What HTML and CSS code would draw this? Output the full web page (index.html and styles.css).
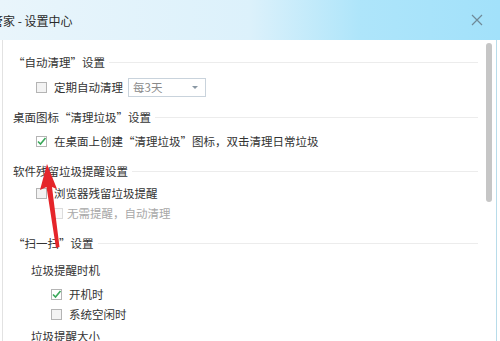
FILE: index.html
```html
<!DOCTYPE html>
<html lang="zh-CN">
<head>
    <meta charset="UTF-8">
    <title>设置中心</title>
    <link rel="stylesheet" href="styles.css">
</head>
<body>
    <div class="window">
        <div class="titlebar">
            <span class="title">管家 - 设置中心</span>
            <svg class="close" width="12" height="12" viewBox="0 0 12 12">
                <path d="M1 1 L11 11 M11 1 L1 11" stroke="#6f8a98" stroke-width="1.2" fill="none"/>
            </svg>
        </div>

        <div class="main">
            <div class="content">
                <div class="section first">
                    <div class="heading">“自动清理”设置</div>
                    <div class="row row-select">
                        <span class="box"></span>
                        <span>定期自动清理</span>
                        <div class="select">
                            <span>每3天</span>
                            <span class="caret"></span>
                        </div>
                    </div>
                </div>

                <div class="section">
                    <div class="heading">桌面图标“清理垃圾”设置</div>
                    <div class="row row-tight">
                        <span class="box checked">
                            <svg width="11" height="11" viewBox="0 0 11 11"><path d="M2 5.5 L4.5 8 L9.5 2" stroke="#3aa85a" stroke-width="1.6" fill="none"/></svg>
                        </span>
                        <span>在桌面上创建“清理垃圾”图标，双击清理日常垃圾</span>
                    </div>
                </div>

                <div class="section">
                    <div class="heading">软件残留垃圾提醒设置</div>
                    <div class="row row-flush">
                        <span class="box"></span>
                        <span>浏览器残留垃圾提醒</span>
                    </div>
                    <div class="row row-sub disabled">
                        <span class="box"></span>
                        <span>无需提醒，自动清理</span>
                    </div>
                </div>

                <div class="section">
                    <div class="heading">“扫一扫”设置</div>
                    <div class="label label-first">垃圾提醒时机</div>
                    <div class="row row-deep">
                        <span class="box checked">
                            <svg width="11" height="11" viewBox="0 0 11 11"><path d="M2 5.5 L4.5 8 L9.5 2" stroke="#3aa85a" stroke-width="1.6" fill="none"/></svg>
                        </span>
                        <span>开机时</span>
                    </div>
                    <div class="row row-deep">
                        <span class="box"></span>
                        <span>系统空闲时</span>
                    </div>
                    <div class="label">垃圾提醒大小</div>
                </div>
            </div>

            <div class="scrollbar">
                <div class="thumb"></div>
            </div>
        </div>

        <!-- red pointer drawn over the page -->
        <svg class="arrow" width="500" height="341" viewBox="0 0 500 341">
            <polygon points="47,164 40,190 46.5,187 56,248 59.5,247 52,187 57,189" fill="#e5252a"/>
        </svg>
    </div>
</body>
</html>
```

FILE: styles.css
```css
body {
    margin: 0;
    font-family: "Noto Sans CJK SC", "Noto Sans", sans-serif;
    font-size: 11.5px;
    color: #333;
    background: #fff;
}
.window {
    position: relative;
    width: 500px;
    height: 341px;
    overflow: hidden;
}
.titlebar {
    height: 40px;
    display: flex;
    align-items: center;
    justify-content: space-between;
    padding-right: 17px;
    background: linear-gradient(to right, #e9f5fb 0%, #dcf1fb 50%, #aee5fa 72%, #a2e1fa 100%);
}
.title {
    margin-left: -9px;
    font-size: 12px;
    color: #2a2a2a;
}
.main {
    display: flex;
    height: 301px;
    margin-left: 2px;
    border-left: 1px solid #e2e2e2;
}
.content {
    flex: 1;
    padding: 12px 0 0 10px;
}
.scrollbar {
    width: 10px;
    padding: 3px 0 0 0;
    border-right: 1px solid #b8dcea;
    margin-right: 3px;
}
.thumb {
    width: 6px;
    height: 159px;
    background: #c6c6c6;
    border-radius: 3px;
}
.section {
    margin-top: 10px;
}
.section.first {
    margin-top: 0;
}
.heading {
    display: flex;
    align-items: center;
    height: 20px;
    line-height: 20px;
    color: #333;
}
.heading::after {
    content: "";
    flex: 1;
    height: 1px;
    margin: 0 8px 0 4px;
    background: #ececec;
}
.row {
    display: flex;
    align-items: center;
    gap: 7px;
    height: 20px;
    margin-left: 23px;
}
.row-select {
    margin-top: 5px;
}
.row-tight {
    margin-top: 4px;
}
.row-flush {
    margin-top: 2px;
}
.row-sub {
    margin-left: 39px;
    gap: 4px;
}
.row-deep {
    margin-left: 38px;
}
.label-first + .row-deep {
    margin-top: 4px;
}
.disabled {
    color: #a8a8a8;
}
.disabled .box {
    border-color: #dcdcdc;
    background: #fafafa;
}
.box {
    width: 11px;
    height: 11px;
    box-sizing: border-box;
    border: 1px solid #b4b4b4;
    background: #f3f3f3;
    display: flex;
    align-items: center;
    justify-content: center;
}
.box.checked {
    background: #fff;
}
.box svg {
    flex: none;
}
.select {
    display: flex;
    align-items: center;
    justify-content: space-between;
    width: 78px;
    height: 19px;
    box-sizing: border-box;
    margin-left: -2px;
    padding: 0 7px 0 4px;
    border: 1px solid #c9d3dc;
    color: #8a8a8a;
}
.caret {
    width: 0;
    height: 0;
    border-left: 3px solid transparent;
    border-right: 3px solid transparent;
    border-top: 3px solid #8a98a4;
}
.label {
    height: 20px;
    line-height: 20px;
    margin-left: 18px;
    margin-top: 2px;
}
.label-first {
    margin-top: 7px;
}
.arrow {
    position: absolute;
    left: 0;
    top: 0;
    pointer-events: none;
}
```
